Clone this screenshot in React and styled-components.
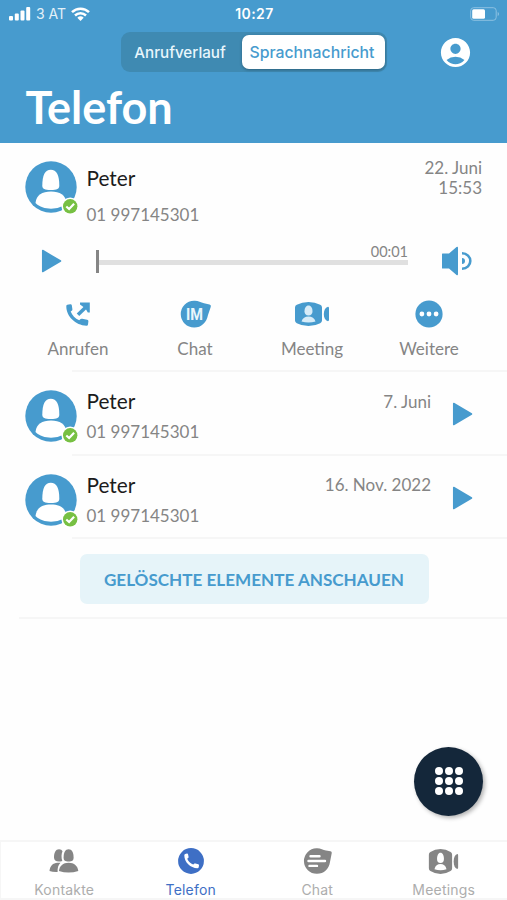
import React from 'react';
import styled, { createGlobalStyle } from 'styled-components';
import { MdAccountCircle } from 'react-icons/md';

const BLUE = '#479bce';

const calls = [
  { name: 'Peter', number: '01 997145301', date: '7. Juni' },
  { name: 'Peter', number: '01 997145301', date: '16. Nov. 2022' },
];

const Avatar = () => (
  <AvatarSvg viewBox="0 0 54 54">
    <circle cx="26" cy="26" r="25.7" fill={BLUE} />
    <path d="M17.3 24.5C17.3 14.500 20 8.800 25.800 8.800S34.300 14.500 34.300 24.500C34.300 28 32 29 25.800 29S17.300 28 17.300 24.500z" fill="#fff" />
    <path d="M10.500 42C11.500 34 17 30.600 26 30.600S40.500 34 41.500 42C37.500 46 32 47.700 26 47.700S14.500 46 10.500 42z" fill="#fff" />
    <circle cx="45.200" cy="45.300" r="8.800" fill="#fff" />
    <circle cx="45.200" cy="45.300" r="7.200" fill="#77c043" />
    <path d="M41.300 45.500l2.800 2.500 5-5.200" fill="none" stroke="#fff" strokeWidth="2.200" />
  </AvatarSvg>
);

const PlayIcon = () => (
  <svg width="22" height="24" viewBox="0 0 22 24">
    <path d="M1.700 1.500L19.500 12 1.700 22.500z" fill={BLUE} stroke={BLUE} strokeWidth="1.500" strokeLinejoin="round" />
  </svg>
);

const VolumeIcon = () => (
  <svg width="32" height="30" viewBox="0 0 32 30">
    <path d="M1.500 7.500H8L15.500 1Q17 0 17 2V28Q17 30 15.500 29L8 22.500H1.500Q1 22.500 1 22V8Q1 7.500 1.500 7.500z" fill={BLUE} />
    <path d="M21 12a3 3 0 0 1 0 6z" fill={BLUE} />
    <path d="M21 7.300c5 0 8.300 3.500 8.300 7.700s-3.300 7.700-8.300 7.700" fill="none" stroke={BLUE} strokeWidth="2.600" />
  </svg>
);

const CallOutIcon = () => (
  <svg width="26" height="28" viewBox="0 0 26 28">
    <path d="M1.300 6.300Q1.200 5.100 2.300 4.800L5.200 4.200Q6.600 4 6.800 5.200L7.400 9.200Q7.500 10.200 6.700 10.700L5.700 11.400C7.300 15.300 10 18.300 14.200 20.200L15.600 19Q16.300 18.500 17.200 18.700L22.200 19.700Q23.500 20 23.400 21.300L23 24.500Q22.800 25.900 21.400 25.800C10.500 25.200 1.300 16.500 1.300 6.300z" fill={BLUE} />
    <path d="M13 14.700L21 7" stroke={BLUE} strokeWidth="3.600" fill="none" />
    <path d="M15 2.500H24.800V12.500H22.800L20.500 8.500 15 4.600z" fill={BLUE} />
  </svg>
);

const ImIcon = () => (
  <svg width="34" height="28" viewBox="-2 0 34 28">
    <path d="M14 .8C18 .4 20.500 2.500 24 3.300L29.500 4.500Q31.300 5 30.800 6.800L28 15C26.500 22.500 21.500 27.600 14.300 27.600A13.400 13.400 0 0 1 14 .8z" fill={BLUE} />
    <ImText x="6" y="20" textLength="17" lengthAdjust="spacingAndGlyphs">IM</ImText>
  </svg>
);

const MeetingIcon = ({ color, inner, width = 36, height = 28 }) => (
  <svg width={width} height={height} viewBox="0 0 36 28" preserveAspectRatio="none">
    <path d="M1 7.500Q1 5.600 2.800 4.800Q8 2 14.500 2T26.200 4.800Q28 5.600 28 7.500V20.500Q28 22.400 26.200 23.200Q21 26 14.500 26T2.800 23.200Q1 22.400 1 20.500z" fill={color} />
    <path d="M10.500 11.500C10.500 8 12 5.500 14.500 5.500s4 2.500 4 6c0 2.300-1.300 4-4 4s-4-1.700-4-4z" fill={inner} />
    <path d="M7.500 21.500C8.500 18 11 16.500 14.500 16.500s6 1.500 7 5q-7 2-14 0z" fill={inner} />
    <path d="M29.800 14C29.800 10 31.500 7.500 33.500 6.900Q35 6.600 35 8.200V19.800Q35 21.400 33.500 21.100C31.500 20.500 29.800 18 29.800 14z" fill={color} />
  </svg>
);

const MoreIcon = () => (
  <svg width="28" height="28" viewBox="0 0 28 28">
    <circle cx="14" cy="14" r="13.600" fill={BLUE} />
    {[6.9, 14, 21.1].map((cx) => <circle key={cx} cx={cx} cy="14" r="2.400" fill="#fff" />)}
  </svg>
);

const ContactsIcon = () => (
  <svg width="30" height="26" viewBox="0 0 30 26" fill="#858585">
    <path d="M5 9.500C5 4.500 6.800 1.300 10 1.300c1.800 0 2.900.8 3.500 2C12.300 6 12.200 9.500 13.300 13.100c-4.800 1.300-8.300.2-8.300-3.600z" />
    <path d="M14.600 9.500C14.600 4.500 16.300 1.300 19.600 1.300s5 3.200 5 8.200c0 3-1.400 4-5 4s-5-1-5-4z" />
    <path d="M.5 23C1 18 4 15 8.500 14.800H11.500C9 17.500 8.500 20 8.600 24Q3.500 24.200.5 23z" />
    <path d="M9.900 23C10.500 18 14 14.800 19.600 14.800S28.700 18 29.300 23q-9.700 3-19.400 0z" />
  </svg>
);

const PhoneIcon = () => (
  <svg width="26" height="26" viewBox="0 0 26 26">
    <circle cx="13" cy="13" r="12.900" fill="#3e6fc5" />
    <path d="M6.300 7.200Q6.300 6.200 7.200 6L8.900 5.600Q9.900 5.500 10.100 6.400L10.600 9Q10.700 9.700 10.100 10.100L9.200 10.800C10.500 13.500 12.300 15.400 15.200 16.600L16.200 15.700Q16.700 15.200 17.300 15.400L20.300 16.200Q21.200 16.500 21 17.400L20.700 19.200Q20.500 20.200 19.400 20.200C12.500 20 6.300 14.200 6.300 7.200z" fill="#fff" />
  </svg>
);

const ChatIcon = () => (
  <svg width="32" height="26" viewBox="-2 0 32 26">
    <path d="M13.500.2C17.500 0 20 1.800 23 2.400L27.500 3.200Q29 3.600 28.700 5.200L27 14C26 21 21 25.800 14 25.800A12.800 12.800 0 0 1 13.500.2z" fill="#858585" />
    <path d="M7.500 8.200h9M5.500 13h16.500M6.500 17.900h7.500" stroke="#fff" strokeWidth="2.400" strokeLinecap="round" />
  </svg>
);

const actions = [
  { label: 'Anrufen', icon: <CallOutIcon /> },
  { label: 'Chat', icon: <ImIcon /> },
  { label: 'Meeting', icon: <MeetingIcon color={BLUE} inner="#d7ecf8" /> },
  { label: 'Weitere', icon: <MoreIcon /> },
];

const tabs = [
  { label: 'Kontakte', icon: <ContactsIcon /> },
  { label: 'Telefon', icon: <PhoneIcon />, active: true },
  { label: 'Chat', icon: <ChatIcon /> },
  { label: 'Meetings', icon: <MeetingIcon color="#858585" inner="#fff" width={31} height={29} /> },
];

const App = () => {
  return (
    <Screen>
      <GlobalStyle />
      <Header>
        <StatusBar>
          <Carrier>
            <svg width="22" height="14" viewBox="0 0 22 14" fill="#fff">
              <rect x="0" y="9" width="4" height="4.500" rx="1" />
              <rect x="5.800" y="6.500" width="4" height="7" rx="1" />
              <rect x="11.500" y="3.500" width="4" height="10" rx="1" />
              <rect x="17.200" y="0" width="4" height="13.500" rx="1" />
            </svg>
            <span>3 AT</span>
            <svg width="19" height="14" viewBox="0 0 19 14">
              <path d="M1 5.200a12.200 12.200 0 0 1 17 0M4 8.500a8 8 0 0 1 11 0" fill="none" stroke="#fff" strokeWidth="2.500" />
              <path d="M6.300 10.800a4.800 4.800 0 0 1 6.400 0L9.500 14z" fill="#fff" />
            </svg>
          </Carrier>
          <Time>10:27</Time>
          <Battery>
            <svg width="30" height="14" viewBox="0 0 30 14">
              <rect x=".7" y=".7" width="25.500" height="12.600" rx="3" fill="none" stroke="#8cc1e2" />
              <rect x="2.200" y="2.200" width="12.800" height="9.600" rx="1.500" fill="#fff" />
              <path d="M27.700 5v4q1.300-.5 1.300-2t-1.300-2z" fill="#8cc1e2" />
            </svg>
          </Battery>
        </StatusBar>
        <Toolbar>
          <Segmented>
            <Segment>Anrufverlauf</Segment>
            <Segment $active>Sprachnachricht</Segment>
          </Segmented>
          <MdAccountCircle size={35} color="#fff" />
        </Toolbar>
        <Title>Telefon</Title>
      </Header>

      <Voicemail>
        <Summary>
          <Avatar />
          <Details $top={3.5} $gap={15}>
            <Name>Peter</Name>
            <Muted>01 997145301</Muted>
          </Details>
          <Stamp>22. Juni<br />15:53</Stamp>
        </Summary>
        <Player>
          <PlayIcon />
          <Timeline>
            <Thumb />
            <TrackColumn>
              <Duration>00:01</Duration>
              <Track />
            </TrackColumn>
          </Timeline>
          <VolumeIcon />
        </Player>
        <Actions>
          {actions.map((action) => (
            <Action key={action.label}>
              <ActionIcon>{action.icon}</ActionIcon>
              <Muted>{action.label}</Muted>
            </Action>
          ))}
        </Actions>
        <Divider $inset={72} />
      </Voicemail>

      {calls.map((call) => (
        <CallRow key={call.date}>
          <CallBody>
            <Avatar />
            <Details $top={-2} $gap={9}>
              <Name>{call.name}</Name>
              <Muted>{call.number}</Muted>
            </Details>
            <CallDate>{call.date}</CallDate>
            <RowPlay><PlayIcon /></RowPlay>
          </CallBody>
          <Divider $inset={72} />
        </CallRow>
      ))}

      <Deleted>
        <DeletedButton>GELÖSCHTE ELEMENTE ANSCHAUEN</DeletedButton>
        <Divider $inset={19} />
      </Deleted>

      <Spacer />
      <DialButton>
        {Array.from({ length: 9 }, (_, i) => <Dot key={i} />)}
      </DialButton>

      <TabBar>
        {tabs.map((tab) => (
          <Tab key={tab.label} $active={tab.active}>
            <TabIcon>{tab.icon}</TabIcon>
            <span>{tab.label}</span>
          </Tab>
        ))}
      </TabBar>
    </Screen>
  );
};

// Styled Components
const GlobalStyle = createGlobalStyle`
  * {
    box-sizing: border-box;
  }

  body {
    margin: 0;
    background: #fefefe;
  }

  svg {
    display: block;
    flex-shrink: 0;
  }

  button {
    border: none;
    padding: 0;
    font: inherit;
  }
`;

const Screen = styled.div`
  width: 507px;
  height: 900px;
  display: flex;
  flex-direction: column;
  overflow: hidden;
  background: #fefefe;
  font-family: Lato, sans-serif;
`;

const Header = styled.header`
  height: 143px;
  flex-shrink: 0;
  background: ${BLUE};
  color: #fff;
`;

const StatusBar = styled.div`
  height: 32px;
  padding: 0 7px 5px 9px;
  display: grid;
  grid-template-columns: 1fr auto 1fr;
  align-items: center;
  font-family: Inter, sans-serif;
  font-size: 14px;
`;

const Carrier = styled.div`
  display: flex;
  align-items: center;
  gap: 5px;
  color: #e3f0f8;

  span {
    width: 30px;
    white-space: nowrap;
  }
`;

const Time = styled.div`
  font-weight: 600;
  letter-spacing: 0.4px;
`;

const Battery = styled.div`
  display: flex;
  justify-content: flex-end;
`;

const Toolbar = styled.div`
  display: flex;
  align-items: center;
  justify-content: space-between;
  height: 40px;
  padding: 0 34px 0 120.5px;
`;

const Segmented = styled.div`
  width: 266px;
  height: 40px;
  padding: 3px 2px 3px 0;
  display: flex;
  border-radius: 9px;
  background: #3f8ab2;
  font-family: Inter, sans-serif;
`;

const Segment = styled.button`
  width: ${({ $active }) => ($active ? '143px' : '121px')};
  display: flex;
  align-items: center;
  justify-content: center;
  padding-right: 2px;
  border-radius: 7px;
  font-size: ${({ $active }) => ($active ? '15.8px' : '15.2px')};
  font-weight: 500;
  color: ${({ $active }) => ($active ? BLUE : '#e9f6fc')};
  background: ${({ $active }) => ($active ? '#fff' : 'transparent')};
  box-shadow: ${({ $active }) => ($active ? '0 1px 3px rgba(0, 0, 0, 0.3)' : 'none')};

  &:first-child {
    padding: 0 2px 0 0;
  }
`;

const Title = styled.h1`
  margin: 8px 0 0 25.5px;
  font-size: 45px;
  line-height: 54px;
  font-weight: 700;
`;

const Divider = styled.div`
  height: 2px;
  margin-top: auto;
  margin-left: ${({ $inset }) => $inset}px;
  background: #f6f6f6;
`;

const Voicemail = styled.section`
  height: 229px;
  flex-shrink: 0;
  display: flex;
  flex-direction: column;
`;

const Summary = styled.div`
  display: flex;
  height: 103px;
  padding: 18px 25px 0;
`;

const AvatarSvg = styled.svg`
  width: 54px;
  height: 54px;
`;

const Details = styled.div`
  display: flex;
  flex-direction: column;
  gap: ${({ $gap }) => $gap}px;
  flex: 1;
  margin-top: ${({ $top }) => $top}px;
  padding-left: 7.5px;
`;

const Name = styled.div`
  font-size: 20.8px;
  line-height: 25px;
  color: #1c1c1c;
`;

const Muted = styled.div`
  font-size: 17px;
  line-height: 20px;
  color: #858585;
`;

const Stamp = styled(Muted)`
  margin-top: -3px;
  text-align: right;
`;

const Player = styled.div`
  display: flex;
  align-items: center;
  justify-content: space-between;
  height: 30px;
  padding: 0 34px 0 41px;
`;

const Timeline = styled.div`
  display: flex;
  align-items: center;
  width: 312px;
`;

const Thumb = styled.div`
  width: 3px;
  height: 23px;
  background: #858585;
`;

const TrackColumn = styled.div`
  flex: 1;
  padding-bottom: 15px;
`;

const Duration = styled.div`
  font-size: 14.5px;
  line-height: 17px;
  text-align: right;
  color: #858585;
`;

const Track = styled.div`
  height: 5px;
  background: #e0e0e0;
`;

const Actions = styled.div`
  display: grid;
  grid-template-columns: repeat(4, 117px);
  justify-content: center;
  margin-top: 23.5px;
`;

const Action = styled.div`
  display: flex;
  flex-direction: column;
  align-items: center;
  gap: 11px;
`;

const ActionIcon = styled.div`
  height: 28px;
`;

const CallRow = styled.section`
  height: 83.5px;
  flex-shrink: 0;
  display: flex;
  flex-direction: column;
`;

const CallBody = styled.div`
  display: flex;
  padding: 18px 33px 0 25px;
`;

const CallDate = styled(Muted)`
  padding-top: 1.5px;
`;

const RowPlay = styled.div`
  padding: 12px 0 0 21px;
`;

const Deleted = styled.section`
  height: 80px;
  flex-shrink: 0;
  padding-top: 15px;
  display: flex;
  flex-direction: column;
`;

const DeletedButton = styled.button`
  width: 349px;
  height: 50px;
  margin-left: 79.5px;
  border-radius: 7px;
  background: #e6f4f9;
  color: ${BLUE};
  font-size: 17.1px;
  font-weight: 700;
`;

const Spacer = styled.div`
  flex: 1;
`;

const DialButton = styled.button`
  align-self: flex-end;
  flex-shrink: 0;
  width: 69px;
  height: 69px;
  margin: 0 24px 24.5px 0;
  display: grid;
  grid-template-columns: repeat(3, 8px);
  gap: 2px;
  place-content: center;
  border-radius: 50%;
  background: #14273a;
  box-shadow: 2px 2px 4px rgba(0, 0, 0, 0.3);
`;

const Dot = styled.span`
  width: 8px;
  height: 8px;
  border-radius: 50%;
  background: #fff;
`;

const TabBar = styled.nav`
  height: 60px;
  flex-shrink: 0;
  display: grid;
  grid-template-columns: repeat(4, 1fr);
  border: 2px solid #f6f6f6;
  border-width: 2px 0 2px 1px;
  background: #fff;
`;

const Tab = styled.div`
  display: flex;
  flex-direction: column;
  align-items: center;
  padding-top: 6px;
  gap: 7px;
  font-family: Inter, sans-serif;
  font-size: 14px;
  line-height: 17px;
  letter-spacing: 0.2px;
  color: ${({ $active }) => ($active ? '#3e6fc5' : '#adadad')};
`;

const TabIcon = styled.div`
  height: 26px;
  display: flex;
  align-items: center;
`;

const ImText = styled.text`
  font-family: Roboto, sans-serif;
  font-size: 16.5px;
  font-weight: 700;
  fill: #e9f6fc;
`;

export default App;
